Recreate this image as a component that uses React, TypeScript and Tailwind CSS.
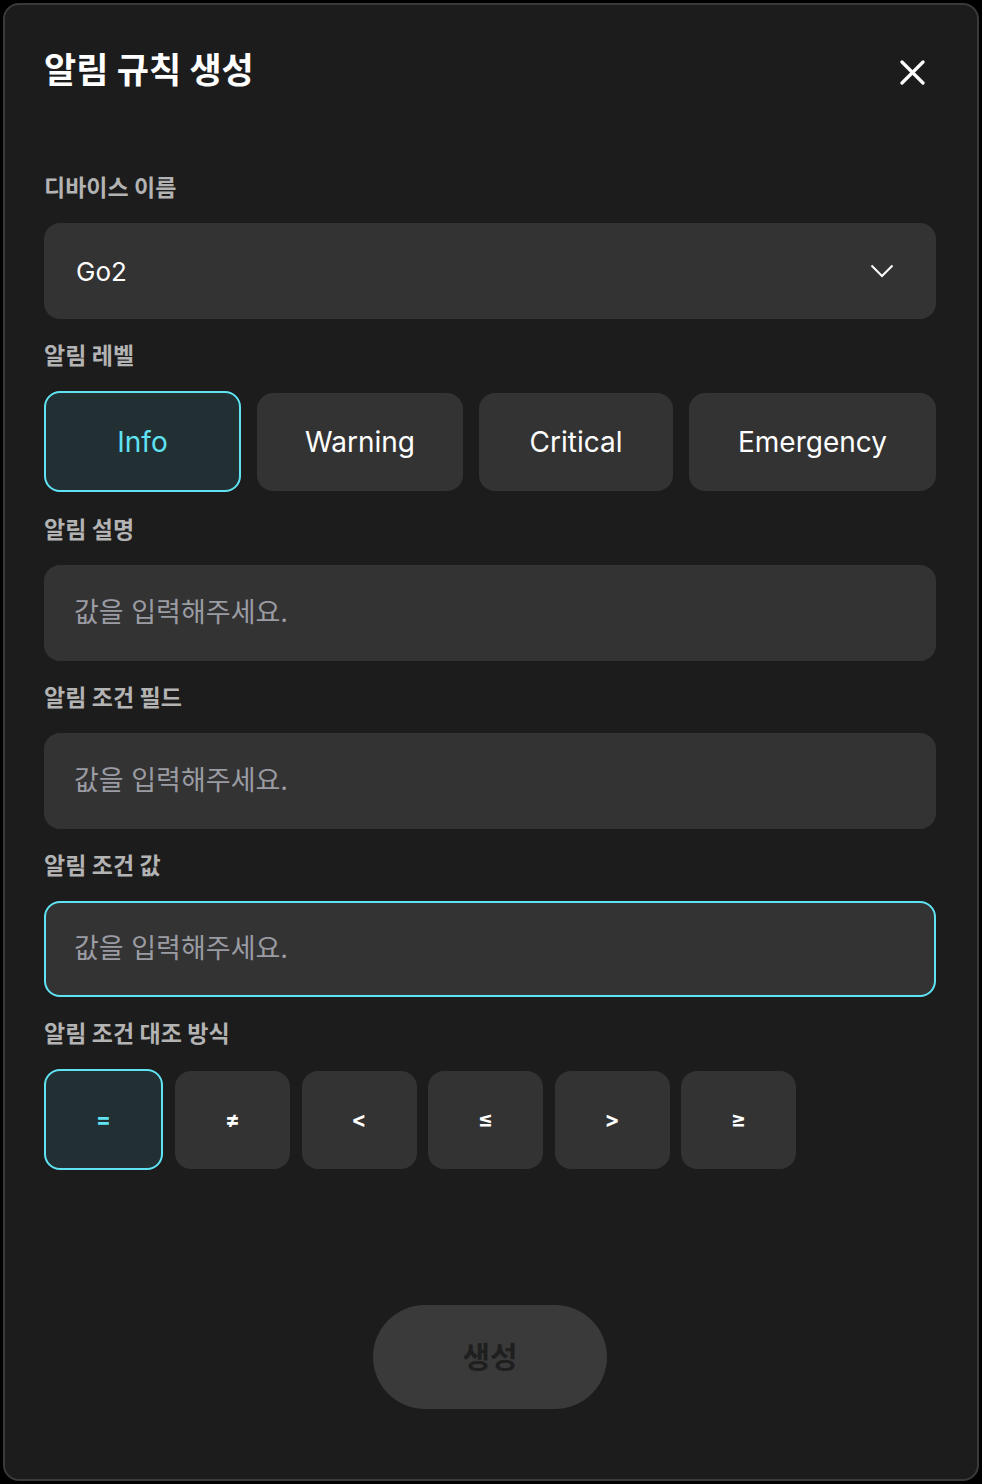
import React, { useState } from 'react';

const font = { fontFamily: '"Inter", "Noto Sans CJK KR", sans-serif' };

const levels = [
  { label: 'Info', w: 'w-[197px]' },
  { label: 'Warning', w: 'w-[206px]' },
  { label: 'Critical', w: 'w-[194px]' },
  { label: 'Emergency', w: 'flex-1' },
];

const operators = ['=', '≠', '<', '≤', '>', '≥'];

const Label: React.FC<{ children: React.ReactNode }> = ({ children }) => (
  <div className="h-[28px] leading-[28px] text-[23px] font-bold text-[#b3b3b3] mb-[21px]">{children}</div>
);

const TextField: React.FC<{ active?: boolean }> = ({ active }) => (
  <div
    className={
      'h-[96px] rounded-[16px] bg-[#333333] flex items-center text-[27px] text-[#9b9ca3] ' +
      (active ? 'border-2 border-[#5fe3f2] pl-[28px]' : 'pl-[30px]')
    }
  >
    값을 입력해주세요.
  </div>
);

export default function App() {
  const [level, setLevel] = useState('Info');
  const [op, setOp] = useState('=');

  return (
    <div className="w-[982px] h-[1484px] bg-black p-[3px]" style={font}>
      <div className="h-full rounded-[16px] border-2 border-[#3a3a3a] bg-[#1c1c1c] pl-[39px] pr-[41px] pt-[45px] flex flex-col">
        <div className="flex items-center justify-between h-[40px]">
          <h1 className="text-[35px] font-bold text-white leading-[40px]">알림 규칙 생성</h1>
          <button className="w-[40px] h-[40px] flex items-center justify-center mr-[4px] mt-[4px]">
            <svg width="25" height="25" viewBox="0 0 25 25" fill="none">
              <path d="M2 2L23 23M23 2L2 23" stroke="white" strokeWidth="3.2" strokeLinecap="round" />
            </svg>
          </button>
        </div>

        <div className="mt-[84px]">
          <Label>디바이스 이름</Label>
          <div className="h-[96px] rounded-[16px] bg-[#333333] flex items-center justify-between pl-[32px] pr-[42px]">
            <span className="text-[26px] text-white">Go2</span>
            <svg width="24" height="14" viewBox="0 0 24 14" fill="none">
              <path d="M1.5 1.5L12 12L22.5 1.5" stroke="white" strokeWidth="2" />
            </svg>
          </div>
        </div>

        <div className="mt-[23px]">
          <Label>알림 레벨</Label>
          <div className="flex items-center gap-[16px] h-[101px]">
            {levels.map((l) => {
              const on = l.label === level;
              return (
                <button
                  key={l.label}
                  onClick={() => setLevel(l.label)}
                  className={
                    l.w +
                    ' rounded-[16px] text-[28px] ' +
                    (on
                      ? 'h-[101px] bg-[#223034] border-2 border-[#5fe3f2] text-[#5fe3f2]'
                      : 'h-[98px] bg-[#333333] text-white')
                  }
                >
                  {l.label}
                </button>
              );
            })}
          </div>
        </div>

        <div className="mt-[24px]">
          <Label>알림 설명</Label>
          <TextField />
        </div>

        <div className="mt-[23px]">
          <Label>알림 조건 필드</Label>
          <TextField />
        </div>

        <div className="mt-[23px]">
          <Label>알림 조건 값</Label>
          <TextField active />
        </div>

        <div className="mt-[23px]">
          <Label>알림 조건 대조 방식</Label>
          <div className="flex items-center gap-[12px] h-[101px]">
            {operators.map((o, i) => {
              const on = o === op;
              return (
                <button
                  key={o}
                  onClick={() => setOp(o)}
                  className={
                    'rounded-[16px] text-[22px] font-bold ' +
                    (i > 1 ? '-ml-[0.5px] ' : '') +
                    (on
                      ? 'w-[119px] h-[101px] bg-[#223034] border-2 border-[#5fe3f2] text-[#5fe3f2]'
                      : 'w-[115px] h-[98px] bg-[#333333] text-white')
                  }
                >
                  {o}
                </button>
              );
            })}
          </div>
        </div>

        <div className="flex justify-center mt-[135px]">
          <button className="w-[234px] h-[104px] rounded-full bg-[#3a3a3a] text-[30px] font-bold text-[#1f1f1f]">
            생성
          </button>
        </div>
      </div>
    </div>
  );
}
